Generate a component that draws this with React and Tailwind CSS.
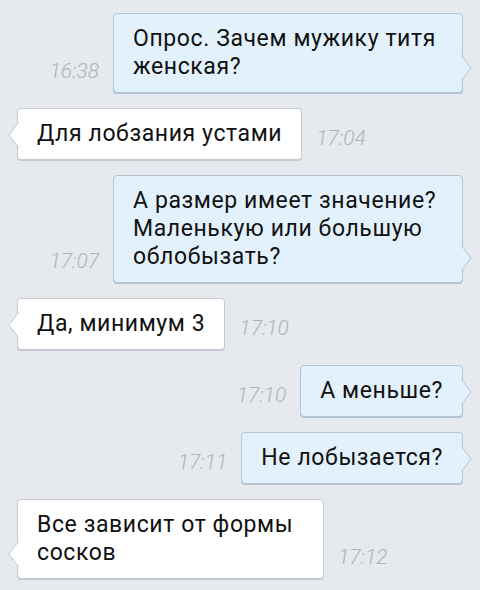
const messages = [
    { out: true, time: '16:38', lines: ['Опрос. Зачем мужику титя', 'женская?'], width: 'w-[350px]' },
    { out: false, time: '17:04', lines: ['Для лобзания устами'] },
    { out: true, time: '17:07', lines: ['А размер имеет значение?', 'Маленькую или большую', 'облобызать?'], width: 'w-[350px]' },
    { out: false, time: '17:10', lines: ['Да, минимум 3'] },
    { out: true, time: '17:10', lines: ['А меньше?'] },
    { out: true, time: '17:11', lines: ['Не лобызается?'] },
    { out: false, time: '17:12', lines: ['Все зависит от формы', 'сосков'], width: 'w-[307px]' },
];

// little arrow on the side of a bubble
const Tail = ({ out }) => {
    if (out) {
        return (
            <svg className="absolute right-[-10px] bottom-[11px]" width="11" height="26" viewBox="0 0 11 26">
                <polygon points="0,0 10,13 0,26" fill="#e3f1fc" />
                <polyline points="0.5,0.5 10,13 0.5,25.5" fill="none" stroke="#b3c5d5" strokeWidth="1" />
            </svg>
        );
    }
    return (
        <svg className="absolute left-[-10px] bottom-[11px]" width="11" height="26" viewBox="0 0 11 26">
            <polygon points="11,0 1,13 11,26" fill="#ffffff" />
            <polyline points="10.5,0.5 1,13 10.5,25.5" fill="none" stroke="#c6cad0" strokeWidth="1" />
        </svg>
    );
};

const Bubble = ({ msg }) => (
    <div
        className={
            'relative rounded-[4px] border px-[19px] py-[11px] text-[23px] tracking-[0.6px] leading-[28px] text-[#111] ' +
            (msg.out
                ? 'bg-[#e3f1fc] border-[#b3c5d5] shadow-[0_1px_0_#b3c5d5] '
                : 'bg-white border-[#c6cad0] shadow-[0_1px_0_#c6cad0] ') +
            (msg.width || '')
        }
    >
        {msg.lines.map((line, i) => (
            <div key={i} className="whitespace-nowrap">{line}</div>
        ))}
        <Tail out={msg.out} />
    </div>
);

const Time = ({ value }) => (
    <span className="mb-[8px] text-[21px] leading-[28px] italic font-light text-[#afb3b9]">
        {value}
    </span>
);

export default function App() {
    return (
        <div
            className="w-[480px] h-[590px] overflow-hidden bg-[#e6e9ed] pt-[13px] flex flex-col gap-[15px]"
            style={{ fontFamily: 'Roboto, "Noto Sans", sans-serif' }}
        >
            {messages.map((msg, idx) =>
                msg.out ? (
                    <div key={idx} className="flex justify-end items-end gap-[14px] pr-[17px]">
                        <Time value={msg.time} />
                        <Bubble msg={msg} />
                    </div>
                ) : (
                    <div key={idx} className="flex justify-start items-end gap-[14px] pl-[17px]">
                        <Bubble msg={msg} />
                        <Time value={msg.time} />
                    </div>
                )
            )}
        </div>
    );
}
